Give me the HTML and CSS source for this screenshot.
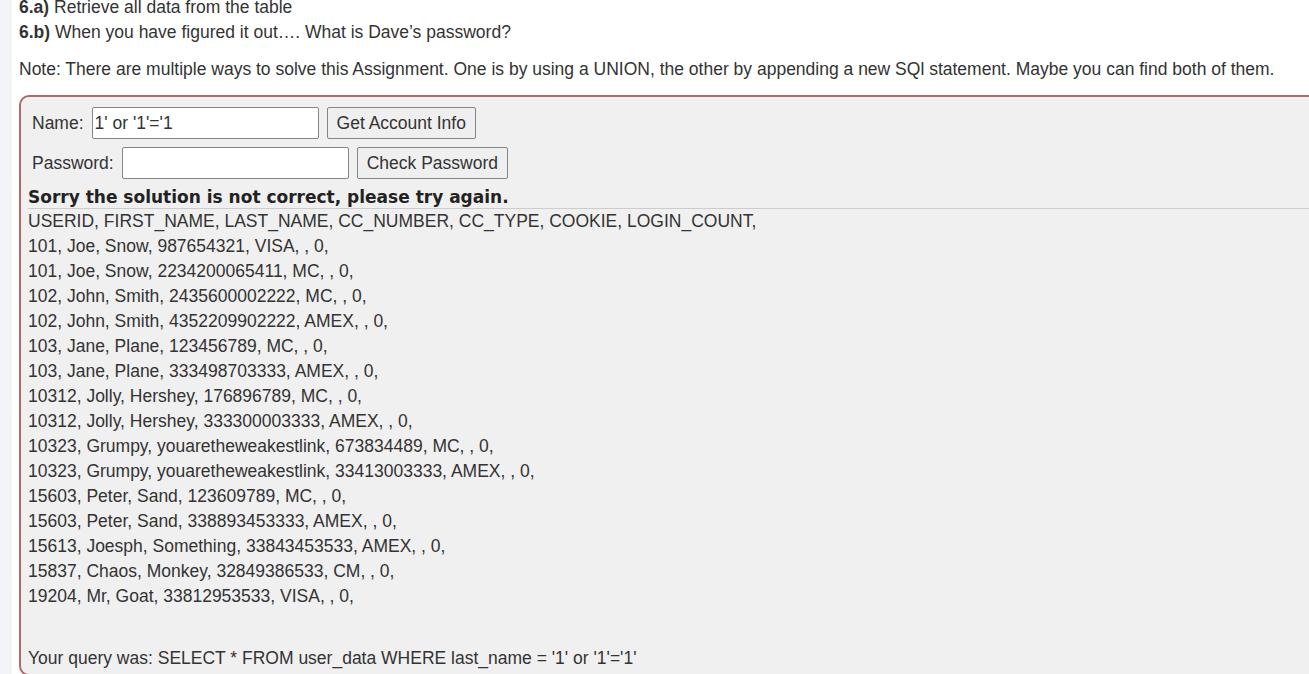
FILE: index.html
```html
<!DOCTYPE html>
<html>
<head>
<meta charset="utf-8">
<link rel="stylesheet" href="styles.css">
</head>
<body>
<div class="page">
  <div class="sidebar"></div>
  <div class="content">
    <p class="step first"><b>6.a)</b> Retrieve all data from the table</p>
    <p class="step"><b>6.b)</b> When you have figured it out…. What is Dave’s password?</p>
    <p class="note">Note: There are multiple ways to solve this Assignment. One is by using a UNION, the other by appending a new SQl statement. Maybe you can find both of them.</p>
    <div class="attack">
      <form class="row">
        <label class="lbl">Name:</label>
        <input class="field" type="text" value="1' or '1'='1">
        <button class="btn" type="button">Get Account Info</button>
      </form>
      <form class="row">
        <label class="lbl">Password:</label>
        <input class="field" type="password" value="">
        <button class="btn" type="button">Check Password</button>
      </form>
      <div class="feedback">Sorry the solution is not correct, please try again.</div>
      <div class="output">
        <div class="line">USERID, FIRST_NAME, LAST_NAME, CC_NUMBER, CC_TYPE, COOKIE, LOGIN_COUNT, </div>
        <div class="line">101, Joe, Snow, 987654321, VISA, , 0, </div>
        <div class="line">101, Joe, Snow, 2234200065411, MC, , 0, </div>
        <div class="line">102, John, Smith, 2435600002222, MC, , 0, </div>
        <div class="line">102, John, Smith, 4352209902222, AMEX, , 0, </div>
        <div class="line">103, Jane, Plane, 123456789, MC, , 0, </div>
        <div class="line">103, Jane, Plane, 333498703333, AMEX, , 0, </div>
        <div class="line">10312, Jolly, Hershey, 176896789, MC, , 0, </div>
        <div class="line">10312, Jolly, Hershey, 333300003333, AMEX, , 0, </div>
        <div class="line">10323, Grumpy, youaretheweakestlink, 673834489, MC, , 0, </div>
        <div class="line">10323, Grumpy, youaretheweakestlink, 33413003333, AMEX, , 0, </div>
        <div class="line">15603, Peter, Sand, 123609789, MC, , 0, </div>
        <div class="line">15603, Peter, Sand, 338893453333, AMEX, , 0, </div>
        <div class="line">15613, Joesph, Something, 33843453533, AMEX, , 0, </div>
        <div class="line">15837, Chaos, Monkey, 32849386533, CM, , 0, </div>
        <div class="line">19204, Mr, Goat, 33812953533, VISA, , 0, </div>
        <div class="line blank">&nbsp;</div>
        <p class="query">Your query was: SELECT * FROM user_data WHERE last_name = '1' or '1'='1'</p>
      </div>
    </div>
  </div>
</div>
</body>
</html>
```
FILE: styles.css
```css
html, body {
  margin: 0;
  padding: 0;
  overflow: hidden;
  height: 674px;
}
body {
  font-family: "Liberation Sans", Arial, sans-serif;
  font-size: 17.5px;
  color: #333;
  background: #fff;
}
.page {
  display: flex;
  height: 674px;
}
.sidebar {
  width: 12px;
  flex: 0 0 12px;
  background: #f3f4f8;
}
.content {
  flex: 1 1 auto;
  padding-left: 7px;
  min-width: 0;
}
.step {
  margin: 0;
  line-height: 25px;
}
.step.first {
  margin-top: -5px;
}
.note {
  margin: 12px 0 13px;
  line-height: 25px;
}
.attack {
  width: 1320px;
  background: #f0f0f0;
  border: 2px solid #b06a6a;
  border-radius: 10px;
  padding: 10px 0 3px 7px;
}
.row {
  display: flex;
  align-items: center;
  gap: 8px;
  margin: 0 0 8px 4px;
  height: 32px;
}
.lbl {
  line-height: 20px;
}
.field {
  width: 227px;
  height: 32px;
  box-sizing: border-box;
  border: 1px solid #858585;
  border-radius: 2px;
  background: #fff;
  font-family: "Liberation Sans", Arial, sans-serif;
  font-size: 17.5px;
  color: #333;
  padding: 0 2px;
}
.btn {
  height: 32px;
  box-sizing: border-box;
  border: 1px solid #858585;
  border-radius: 2px;
  background: #efefef;
  font-family: "Liberation Sans", Arial, sans-serif;
  font-size: 17.5px;
  color: #333;
  padding: 0 9px;
}
.feedback {
  font-family: "DejaVu Sans", Verdana, sans-serif;
  font-weight: bold;
  font-size: 17px;
  color: #222;
  line-height: 20px;
  margin-top: 2px;
  padding-bottom: 1px;
  border-bottom: 1px solid #cccccc;
}
.output {
  line-height: 25px;
}
.line {
  white-space: pre;
}
.query {
  margin: 12px 0 0;
  line-height: 25px;
}
```
